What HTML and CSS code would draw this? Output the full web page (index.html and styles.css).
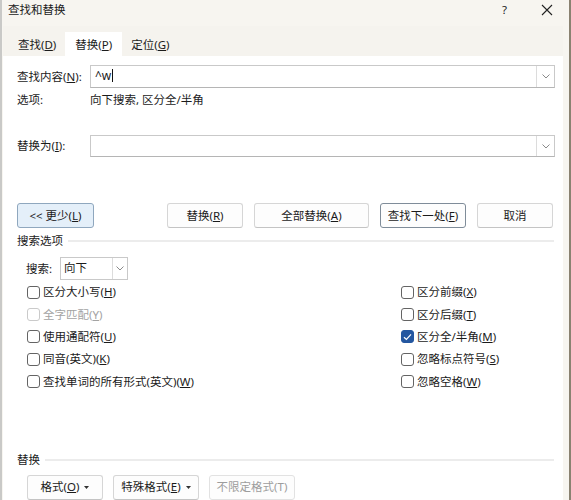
FILE: index.html
```html
<!DOCTYPE html>
<html lang="zh-CN">
<head>
<meta charset="utf-8">
<title>查找和替换</title>
<link rel="stylesheet" href="styles.css">
</head>
<body>
<div class="window">
  <div class="titlebar">
    <span class="title">查找和替换</span>
    <span class="tb-help">?</span>
    <span class="tb-close"><svg width="12" height="12" viewBox="0 0 12 12"><path d="M1 1L11 11M11 1L1 11" stroke="#222" stroke-width="1.1" fill="none"/></svg></span>
  </div>
  <div class="tabstrip">
    <div class="tab">查找(<u>D</u>)</div>
    <div class="tab active">替换(<u>P</u>)</div>
    <div class="tab">定位(<u>G</u>)</div>
  </div>
  <div class="panel">
    <div class="field-row first">
      <span class="label">查找内容(<u>N</u>):</span>
      <div class="combo">
        <span class="combo-text">^w<span class="caret"></span></span>
        <span class="combo-btn"><svg width="8" height="5" viewBox="0 0 8 5"><path d="M0.5 0.5L4 4L7.5 0.5" stroke="#8a8a8a" fill="none"/></svg></span>
      </div>
    </div>
    <div class="info-row">
      <span class="label">选项:</span>
      <span class="info">向下搜索, 区分全/半角</span>
    </div>
    <div class="field-row second">
      <span class="label">替换为(<u>I</u>):</span>
      <div class="combo">
        <span class="combo-text"></span>
        <span class="combo-btn"><svg width="8" height="5" viewBox="0 0 8 5"><path d="M0.5 0.5L4 4L7.5 0.5" stroke="#8a8a8a" fill="none"/></svg></span>
      </div>
    </div>
    <div class="button-row">
      <button class="btn btn-less"><span>&lt;&lt; 更少(<u>L</u>)</span></button>
      <button class="btn w76"><span>替换(<u>R</u>)</span></button>
      <button class="btn w115"><span>全部替换(<u>A</u>)</span></button>
      <button class="btn btn-default w86"><span>查找下一处(<u>F</u>)</span></button>
      <button class="btn w76"><span>取消</span></button>
    </div>
    <div class="group-title search-title"><span>搜索选项</span><span class="group-line"></span></div>
    <div class="search-row">
      <span class="search-label">搜索:</span>
      <div class="select">
        <span class="select-text">向下</span>
        <span class="select-btn"><svg width="8" height="5" viewBox="0 0 8 5"><path d="M0.5 0.5L4 4L7.5 0.5" stroke="#8a8a8a" fill="none"/></svg></span>
      </div>
    </div>
    <div class="options">
      <div class="opt"><span class="box"></span><span>区分大小写(<u>H</u>)</span></div>
      <div class="opt"><span class="box"></span><span>区分前缀(<u>X</u>)</span></div>
      <div class="opt disabled"><span class="box"></span><span>全字匹配(<u>Y</u>)</span></div>
      <div class="opt"><span class="box"></span><span>区分后缀(<u>T</u>)</span></div>
      <div class="opt"><span class="box"></span><span>使用通配符(<u>U</u>)</span></div>
      <div class="opt"><span class="box checked"><svg width="9" height="8" viewBox="0 0 9 8"><path d="M1 4.2L3.4 6.5L8 1.3" stroke="#fff" stroke-width="1.2" fill="none"/></svg></span><span>区分全/半角(<u>M</u>)</span></div>
      <div class="opt"><span class="box"></span><span>同音(英文)(<u>K</u>)</span></div>
      <div class="opt"><span class="box"></span><span>忽略标点符号(<u>S</u>)</span></div>
      <div class="opt"><span class="box"></span><span>查找单词的所有形式(英文)(<u>W</u>)</span></div>
      <div class="opt"><span class="box"></span><span>忽略空格(<u>W</u>)</span></div>
    </div>
    <div class="group-title replace-title"><span>替换</span><span class="group-line"></span></div>
    <div class="bottom-row">
      <button class="btn w76"><span>格式(<u>O</u>)</span><svg class="tri" width="5" height="3" viewBox="0 0 5 3"><path d="M0 0H5L2.5 3Z" fill="#333"/></svg></button>
      <button class="btn w86"><span>特殊格式(<u>E</u>)</span><svg class="tri" width="5" height="3" viewBox="0 0 5 3"><path d="M0 0H5L2.5 3Z" fill="#333"/></svg></button>
      <button class="btn w86 btn-disabled"><span>不限定格式(T)</span></button>
    </div>
  </div>
</div>
</body>
</html>
```

FILE: styles.css
```css
* { box-sizing: border-box; }
html, body {
  margin: 0;
  padding: 0;
  width: 571px;
  height: 500px;
  overflow: hidden;
  background: #f7f5f0;
}
body {
  font-family: "Noto Sans", "Noto Sans CJK SC", sans-serif;
  font-size: 11.5px;
  color: #1b1b1b;
}
u { text-decoration: underline; text-underline-offset: 1px; }
.window {
  width: 571px;
  height: 500px;
  border-left: 2px solid #c9c9c7;
  border-right: 2px solid #8a8271;
  background: #f7f5f0;
  display: flex;
  flex-direction: column;
  padding-right: 6px;
  padding-left: 1px;
}
.titlebar {
  height: 26px;
  display: flex;
  align-items: flex-start;
  padding-top: 2px;
  line-height: 16px;
}
.title { margin-left: 5px; }
.tb-help { margin-left: auto; margin-right: 34px; color: #222; }
.tb-close { margin-right: 10px; padding-top: 2px; }
.tabstrip {
  height: 30px;
  display: flex;
  align-items: flex-end;
  padding-left: 6px;
  background: #f5f3ee;
}
.tab {
  height: 24px;
  line-height: 24px;
  padding: 1px 9px 0 9px;
}
.tab.active { background: #fff; padding: 1px 10px 0 10px; }
.panel {
  flex: 1;
  background: #fff;
  padding: 0 8px 0 14px;
  display: flex;
  flex-direction: column;
}
.field-row { display: flex; align-items: center; height: 23px; }
.field-row.first { margin-top: 9px; }
.field-row.second { margin-top: 27px; height: 22px; }
.label { width: 73px; flex: none; line-height: 16px; }
.combo {
  flex: 1;
  height: 100%;
  border: 1px solid #c9c9c9;
  border-bottom-color: #b5b5b5;
  display: flex;
  align-items: stretch;
}
.combo-text { flex: 1; padding-left: 4px; line-height: 20px; font-size: 12px; }
.caret { display: inline-block; width: 1px; height: 13px; background: #111; vertical-align: -2px; margin-left: 1px; }
.combo-btn {
  width: 18px;
  border-left: 1px solid #dcdcdc;
  display: flex;
  align-items: center;
  justify-content: center;
}
.info-row { display: flex; margin-top: 4px; height: 16px; line-height: 16px; }
.button-row { display: flex; gap: 11px; margin-top: 46px; }
.btn {
  height: 25px;
  font-family: inherit;
  font-size: 11.5px;
  color: #1b1b1b;
  background: #fdfdfd;
  border: 1px solid #d6d6d6;
  border-bottom-color: #c4c4c4;
  border-radius: 3px;
  padding: 0;
  display: flex;
  align-items: center;
  justify-content: center;
  line-height: 16px;
}
.btn-less { width: 77px; margin-right: 62px; background: #e4eff9; border-color: #8fa7be; }
.btn-default { border-color: #7f8c99; }
.btn-disabled { color: #9d9d9d; border-color: #e2e2e2; }
.w76 { width: 76px; }
.w86 { width: 86px; }
.w115 { width: 115px; }
.tri { margin-left: 5px; margin-top: 1px; }
.group-title { display: flex; align-items: center; height: 16px; line-height: 16px; }
.group-line { flex: 1; height: 2px; background: #ececec; margin-left: 5px; margin-right: 1px; }
.search-title { margin-top: 5px; }
.replace-title { margin-top: 59px; }
.search-row { display: flex; align-items: center; margin-top: 8px; padding-left: 9px; height: 22px; }
.search-label { width: 34px; }
.select {
  width: 68px;
  height: 23px;
  border: 1px solid #c9c9c9;
  display: flex;
}
.select-text { flex: 1; padding-left: 3px; line-height: 20px; }
.select-btn {
  width: 15px;
  border-left: 1px solid #dcdcdc;
  display: flex;
  align-items: center;
  justify-content: center;
}
.options {
  display: grid;
  grid-template-columns: 374px auto;
  grid-auto-rows: 22.4px;
  margin-top: 2px;
  padding-left: 10px;
}
.opt { display: flex; align-items: center; line-height: 16px; }
.box {
  width: 13px;
  height: 13px;
  border: 1px solid #646464;
  border-radius: 3px;
  margin-right: 3px;
  flex: none;
  display: flex;
  align-items: center;
  justify-content: center;
}
.box.checked { background: #2457a0; border-color: #2457a0; }
.opt.disabled { color: #a3a3a3; }
.opt.disabled .box { border-color: #cacaca; }
.bottom-row { display: flex; gap: 10px; margin-top: 7px; padding-left: 10px; }
```
